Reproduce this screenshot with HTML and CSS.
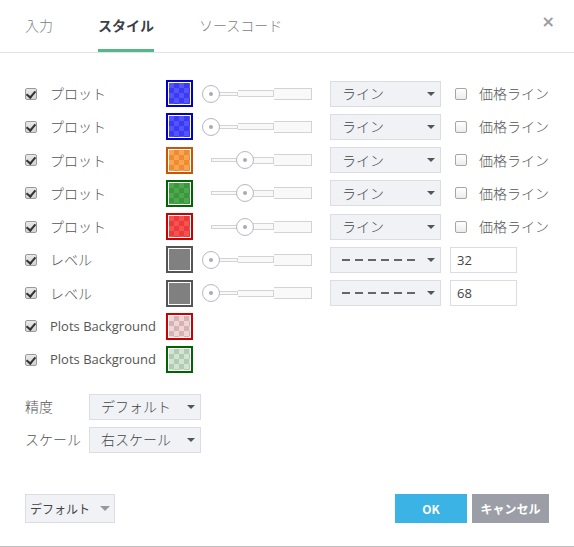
FILE: index.html
```html
<!DOCTYPE html>
<html lang="ja">
<head>
<meta charset="utf-8">
<link rel="stylesheet" href="styles.css">
</head>
<body>
<div class="dialog">
  <div class="header">
    <div class="tab">入力</div>
    <div class="tab active">スタイル</div>
    <div class="tab">ソースコード</div>
    <div class="close">×</div>
  </div>
  <div class="content">
    <div class="row">
      <span class="cb checked"></span><span class="label">プロット</span>
      <span class="swatch sw-blue"><span class="fill"></span></span>
      <span class="slider"><span class="seg s1"></span><span class="seg s2"></span><span class="seg s3"></span><span class="knob k0"></span></span>
      <span class="select"><span class="sel-text">ライン</span><span class="arrow"></span></span>
      <span class="cb cb2"></span><span class="label2">価格ライン</span>
    </div>
    <div class="row">
      <span class="cb checked"></span><span class="label">プロット</span>
      <span class="swatch sw-blue"><span class="fill"></span></span>
      <span class="slider"><span class="seg s1"></span><span class="seg s2"></span><span class="seg s3"></span><span class="knob k0"></span></span>
      <span class="select"><span class="sel-text">ライン</span><span class="arrow"></span></span>
      <span class="cb cb2"></span><span class="label2">価格ライン</span>
    </div>
    <div class="row">
      <span class="cb checked"></span><span class="label">プロット</span>
      <span class="swatch sw-orange"><span class="fill"></span></span>
      <span class="slider"><span class="seg s1"></span><span class="seg s2"></span><span class="seg s3"></span><span class="knob k1"></span></span>
      <span class="select"><span class="sel-text">ライン</span><span class="arrow"></span></span>
      <span class="cb cb2"></span><span class="label2">価格ライン</span>
    </div>
    <div class="row">
      <span class="cb checked"></span><span class="label">プロット</span>
      <span class="swatch sw-green"><span class="fill"></span></span>
      <span class="slider"><span class="seg s1"></span><span class="seg s2"></span><span class="seg s3"></span><span class="knob k1"></span></span>
      <span class="select"><span class="sel-text">ライン</span><span class="arrow"></span></span>
      <span class="cb cb2"></span><span class="label2">価格ライン</span>
    </div>
    <div class="row">
      <span class="cb checked"></span><span class="label">プロット</span>
      <span class="swatch sw-red"><span class="fill"></span></span>
      <span class="slider"><span class="seg s1"></span><span class="seg s2"></span><span class="seg s3"></span><span class="knob k1"></span></span>
      <span class="select"><span class="sel-text">ライン</span><span class="arrow"></span></span>
      <span class="cb cb2"></span><span class="label2">価格ライン</span>
    </div>
    <div class="row">
      <span class="cb checked"></span><span class="label">レベル</span>
      <span class="swatch sw-gray"><span class="fill"></span></span>
      <span class="slider"><span class="seg s1"></span><span class="seg s2"></span><span class="seg s3"></span><span class="knob k0"></span></span>
      <span class="select"><span class="dashes"><i></i><i></i><i></i><i></i><i></i><i></i></span><span class="arrow"></span></span>
      <span class="input">32</span>
    </div>
    <div class="row">
      <span class="cb checked"></span><span class="label">レベル</span>
      <span class="swatch sw-gray"><span class="fill"></span></span>
      <span class="slider"><span class="seg s1"></span><span class="seg s2"></span><span class="seg s3"></span><span class="knob k0"></span></span>
      <span class="select"><span class="dashes"><i></i><i></i><i></i><i></i><i></i><i></i></span><span class="arrow"></span></span>
      <span class="input">68</span>
    </div>
    <div class="row">
      <span class="cb checked"></span><span class="label latin">Plots Background</span>
      <span class="swatch sw-pink"><span class="fill"></span></span>
    </div>
    <div class="row">
      <span class="cb checked"></span><span class="label latin">Plots Background</span>
      <span class="swatch sw-lgreen"><span class="fill"></span></span>
    </div>
    <div class="props">
      <div class="prow">
        <span class="plabel">精度</span>
        <span class="select small"><span class="sel-text">デフォルト</span><span class="arrow"></span></span>
      </div>
      <div class="prow">
        <span class="plabel">スケール</span>
        <span class="select small"><span class="sel-text">右スケール</span><span class="arrow"></span></span>
      </div>
    </div>
  </div>
  <div class="footer">
    <span class="btn-default">デフォルト<span class="arrow light"></span></span>
    <span class="spacer"></span>
    <span class="btn ok">OK</span>
    <span class="btn cancel">キャンセル</span>
  </div>
</div>
</body>
</html>
```
FILE: styles.css
```css
* { box-sizing: border-box; }
html, body { margin: 0; padding: 0; background: #fff; }
body {
  font-family: "Noto Sans CJK JP", "Open Sans", sans-serif;
  font-size: 14px;
  font-weight: 300;
  color: #4a4a4a;
}
.dialog {
  width: 574px;
  height: 547px;
  display: flex;
  flex-direction: column;
  border-bottom: 1px solid #bdbdbd;
}
.header {
  height: 53px;
  display: flex;
  align-items: stretch;
  padding-left: 25px;
  border-bottom: 1px solid #e0e3eb;
}
.tab {
  font-size: 14px;
  color: #7b7e85;
  display: flex;
  align-items: center;
  margin-right: 45px;
  border-bottom: 3px solid transparent;
}
.tab.active {
  color: #3c4049;
  font-weight: bold;
  border-bottom-color: #53b987;
}
.close {
  margin-left: auto;
  margin-right: 19px;
  font-size: 16px;
  color: #9a9ca2;
  display: flex;
  align-items: center;
  padding-bottom: 10px;
  font-family: "DejaVu Sans", sans-serif;
  font-weight: bold;
}
.content {
  padding-top: 24px;
}
.row {
  display: flex;
  align-items: center;
  height: 33.25px;
  padding-left: 25px;
}
.cb {
  width: 12px;
  height: 12px;
  border: 1px solid #a6a6a6;
  border-radius: 2px;
  background: linear-gradient(#ffffff, #ececec);
  margin-right: 13px;
  position: relative;
  flex: none;
}
.cb.checked {
  background: linear-gradient(#e9e9e9, #d4d4d4);
  border-color: #9a9a9a;
}
.cb.checked::after {
  content: "";
  position: absolute;
  left: 2px;
  top: 0px;
  width: 4px;
  height: 7px;
  border: solid #333;
  border-width: 0 2px 2px 0;
  transform: rotate(40deg);
}
.label {
  width: 116px;
  color: #555;
  padding-bottom: 1px;
}
.label.latin {
  font-family: "Open Sans", "Noto Sans CJK JP", sans-serif;
  font-size: 13px;
  font-weight: 400;
  color: #555;
}
.swatch {
  width: 27px;
  height: 27px;
  border: 2px solid;
  padding: 1px;
  background: #fff;
  flex: none;
}
.fill { display: block; width: 100%; height: 100%; }
.sw-blue { border-color: #0000cc; }
.sw-blue .fill { background: repeating-conic-gradient(#3b3bf2 0 25%, #5353ff 0 50%) 0 0 / 10px 10px; }
.sw-orange { border-color: #cc5500; }
.sw-orange .fill { background: repeating-conic-gradient(#f08c30 0 25%, #f7a554 0 50%) 0 0 / 10px 10px; }
.sw-green { border-color: #006400; }
.sw-green .fill { background: repeating-conic-gradient(#3c963c 0 25%, #4ca84c 0 50%) 0 0 / 10px 10px; }
.sw-red { border-color: #cc0000; }
.sw-red .fill { background: repeating-conic-gradient(#ea3a3a 0 25%, #f55252 0 50%) 0 0 / 10px 10px; }
.sw-gray { border-color: #555; }
.sw-gray .fill { background: #808080; }
.sw-pink { border-color: #cc0000; }
.sw-pink .fill { background: repeating-conic-gradient(#d8b2b2 0 25%, #ecd6d6 0 50%) 0 0 / 10px 10px; }
.sw-lgreen { border-color: #006400; }
.sw-lgreen .fill { background: repeating-conic-gradient(#b2ccb2 0 25%, #d4e4d4 0 50%) 0 0 / 10px 10px; }

.slider {
  position: relative;
  width: 109px;
  height: 20px;
  margin-left: 10px;
  display: flex;
  align-items: center;
  padding-left: 8px;
  flex: none;
}
.seg {
  display: block;
  border: 1px solid #d3d3d3;
  background: #f9f9f9;
}
.s1 { width: 27px; height: 4px; }
.s2 { width: 36px; height: 7px; border-left: none; }
.s3 { width: 38px; height: 12px; border-left: none; }
.knob {
  position: absolute;
  top: 1px;
  width: 18px;
  height: 18px;
  border-radius: 50%;
  border: 1px solid #b5b8c2;
  background: #fff;
}
.knob::after {
  content: "";
  position: absolute;
  left: 6px;
  top: 6px;
  width: 4px;
  height: 4px;
  border-radius: 50%;
  background: #a8abb3;
}
.k0 { left: -1px; }
.k1 { left: 33px; }

.select {
  width: 111px;
  height: 26px;
  margin-left: 18px;
  background: #f1f2f6;
  border: 1px solid #dcdde2;
  display: flex;
  align-items: center;
  padding-left: 11px;
  padding-right: 5px;
  position: relative;
  flex: none;
  color: #444;
}
.sel-text { flex: 1; padding-bottom: 1px; }
.arrow {
  width: 0;
  height: 0;
  border-left: 4px solid transparent;
  border-right: 4px solid transparent;
  border-top: 4px solid #555;
  margin-left: auto;
}
.arrow.light { border-top-color: #999; border-left-width: 5px; border-right-width: 5px; border-top-width: 5px; margin-left: 10px; }
.dashes { display: flex; gap: 5px; flex: 1; align-items: center; }
.dashes i { display: block; width: 8px; height: 2px; background: #666; }
.cb2 { margin-left: 14px; margin-right: 12px; }
.label2 { color: #555; padding-bottom: 1px; }
.input {
  margin-left: 9px;
  width: 67px;
  height: 26px;
  border: 1px solid #dcdde2;
  display: flex;
  align-items: center;
  padding-left: 6px;
  color: #444;
  font-family: "Open Sans", sans-serif;
  font-weight: 400;
  font-size: 13px;
}
.props {
  padding-left: 25px;
  padding-top: 14px;
}
.prow {
  display: flex;
  align-items: center;
  height: 33px;
}
.plabel { width: 64px; color: #555; padding-bottom: 1px; }
.select.small { margin-left: 0; width: 112px; }

.footer {
  margin-top: auto;
  display: flex;
  align-items: center;
  padding: 0 25px 23px 25px;
}
.btn-default {
  height: 29px;
  width: 90px;
  background: #f1f2f6;
  border: 1px solid #dcdde2;
  display: flex;
  align-items: center;
  justify-content: center;
  font-size: 12px;
  font-weight: 400;
  color: #444;
}
.spacer { flex: 1; }
.btn {
  height: 29px;
  display: flex;
  align-items: center;
  justify-content: center;
  color: #fff;
  font-weight: bold;
  font-size: 12px;
}
.ok { width: 72px; background: #3bb3e4; margin-right: 5px; }
.cancel { width: 77px; background: #9b9ea6; }
```
